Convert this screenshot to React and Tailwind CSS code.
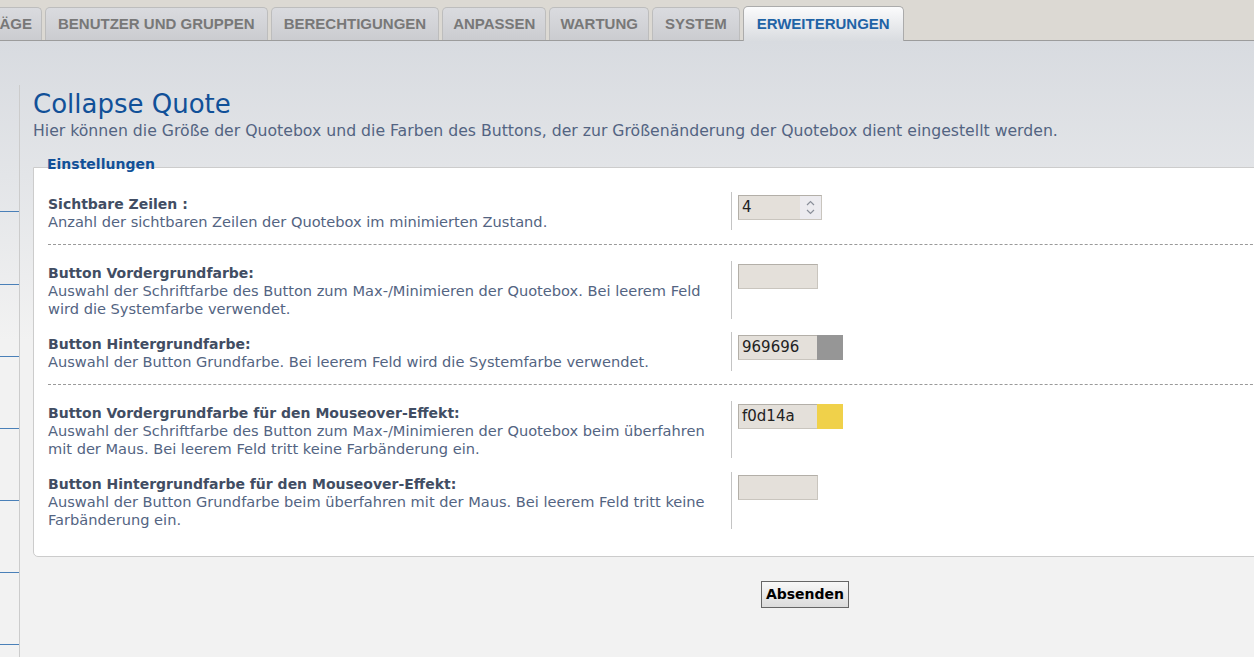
import React from 'react';

const tabs = [
  { label: 'BENUTZER UND GRUPPEN', pad: 'px-[12px]' },
  { label: 'BERECHTIGUNGEN', pad: 'px-[12px]' },
  { label: 'ANPASSEN', pad: 'px-[10px]' },
  { label: 'WARTUNG', pad: 'px-[10px]' },
  { label: 'SYSTEM', pad: 'px-[12px]' },
];

function Tab({ children, pad }) {
  return (
    <div className={`h-[33px] ${pad} flex items-center rounded-t-[5px] border border-b-0 border-[#bdbdbd] bg-gradient-to-b from-[#dadbdf] to-[#cbccd0] text-[15px] font-bold text-[#787878]`}>
      {children}
    </div>
  );
}

function ColorField({ value, swatch }) {
  return (
    <div className="mt-[3px] h-[25px] flex border border-[#c9c5be] border-t-[#b3afa8] border-l-[#b3afa8] bg-[#e4e0da]">
      <div className="w-[78px] pl-[3px] text-[15px] leading-[23px] text-[#222]">{value}</div>
      {swatch && <div className="w-[26px] -my-px -mr-px" style={{ backgroundColor: swatch }} />}
    </div>
  );
}

function Row({ label, desc, height, children }) {
  return (
    <div className="flex items-start" style={{ height }}>
      <div className="w-[683px] pt-[3px] pr-[10px]">
        <div className="text-[14px] leading-[18px] font-bold text-[#414d63]">{label}</div>
        <div className="text-[14.6px] leading-[18px] text-[#536482]">{desc}</div>
      </div>
      <div className="h-full border-l border-[#c4c4c4] pl-[6px]">{children}</div>
    </div>
  );
}

export default function App() {
  return (
    <div className="w-[1254px] h-[657px] overflow-hidden font-['DejaVu_Sans',Verdana,sans-serif]">
      <div className="h-[41px] bg-[#dcd9d3] border-b border-[#9c9c9c] flex items-end gap-[3px] font-['Liberation_Sans',Arial,sans-serif]">
        <div className="h-[33px] w-[42px] pr-[9px] flex items-center justify-end rounded-tr-[5px] border-t border-r border-[#bdbdbd] bg-gradient-to-b from-[#dadbdf] to-[#cbccd0] text-[15px] font-bold text-[#787878] whitespace-nowrap">
          ÄGE
        </div>
        {tabs.map((t) => (
          <Tab key={t.label} pad={t.pad}>{t.label}</Tab>
        ))}
        <div className="h-[35px] -mb-px px-[13px] flex items-center rounded-t-[5px] border border-b-0 border-[#ababab] bg-gradient-to-b from-[#fbfbfc] to-[#d9dce0] text-[15px] font-bold text-[#1f63a6]">
          ERWEITERUNGEN
        </div>
      </div>

      <div className="flex h-[616px] bg-[#f2f2f2] bg-[linear-gradient(#d8dbe0,#e3e5e8_45%,#f2f2f2)] bg-no-repeat bg-[length:100%_300px]">
        <div className="w-[20px] shrink-0 mt-[44px] border-r border-[#cccccc]">
          <div className="h-[127px] border-b border-[#4a80b8]" />
          <div className="h-[73px] border-b border-[#4a80b8]" />
          <div className="h-[72px] border-b border-[#4a80b8]" />
          <div className="h-[72px] border-b border-[#4a80b8]" />
          <div className="h-[72px] border-b border-[#4a80b8]" />
          <div className="h-[72px] border-b border-[#4a80b8]" />
          <div className="h-[72px] border-b border-[#4a80b8]" />
        </div>

        <div className="flex-1 pl-[13px] pt-[47px]">
          <h1 className="text-[26px] leading-[32px] text-[#115098] whitespace-nowrap">Collapse Quote</h1>
          <p className="mt-[2px] text-[15.7px] leading-[18px] text-[#536482] whitespace-nowrap">
            Hier können die Größe der Quotebox und die Farben des Buttons, der zur Größenänderung der Quotebox dient eingestellt werden.
          </p>

          <div className="mt-[16px] ml-[14px] text-[14px] leading-[16px] font-bold text-[#115098] relative">Einstellungen</div>
          <div className="-mt-[5px] -mr-[20px] bg-white border border-[#cccccc] rounded-bl-[5px] pt-[24px] pb-[27px] pl-[14px]">
            <Row
              label="Sichtbare Zeilen :"
              desc="Anzahl der sichtbaren Zeilen der Quotebox im minimierten Zustand."
              height={38}
            >
              <div className="mt-[3px] w-[84px] h-[25px] flex border border-[#c9c5be] border-t-[#b3afa8] border-l-[#b3afa8] bg-[#e4e0da]">
                <div className="flex-1 pl-[3px] text-[15px] leading-[23px] text-[#222]">4</div>
                <div className="w-[21px] bg-[#ecebef] flex flex-col items-center justify-center gap-[3px]">
                  <svg width="9" height="6" viewBox="0 0 9 6"><path d="M1 5 L4.5 1.5 L8 5" fill="none" stroke="#8a8f99" strokeWidth="1.2" /></svg>
                  <svg width="9" height="6" viewBox="0 0 9 6"><path d="M1 1 L4.5 4.5 L8 1" fill="none" stroke="#8a8f99" strokeWidth="1.2" /></svg>
                </div>
              </div>
            </Row>

            <div className="mt-[14px] border-t border-dashed border-[#9a9a9a]" />

            <div className="mt-[16px]">
              <Row
                label="Button Vordergrundfarbe:"
                desc="Auswahl der Schriftfarbe des Button zum Max-/Minimieren der Quotebox. Bei leerem Feld wird die Systemfarbe verwendet."
                height={58}
              >
                <div className="w-[80px]"><ColorField value="" /></div>
              </Row>
            </div>

            <div className="mt-[13px]">
              <Row
                label="Button Hintergrundfarbe:"
                desc="Auswahl der Button Grundfarbe. Bei leerem Feld wird die Systemfarbe verwendet."
                height={39}
              >
                <div className="w-[105px]"><ColorField value="969696" swatch="#969696" /></div>
              </Row>
            </div>

            <div className="mt-[13px] border-t border-dashed border-[#9a9a9a]" />

            <div className="mt-[16px]">
              <Row
                label="Button Vordergrundfarbe für den Mouseover-Effekt:"
                desc="Auswahl der Schriftfarbe des Button zum Max-/Minimieren der Quotebox beim überfahren mit der Maus. Bei leerem Feld tritt keine Farbänderung ein."
                height={57}
              >
                <div className="w-[105px]"><ColorField value="f0d14a" swatch="#f0d14a" /></div>
              </Row>
            </div>

            <div className="mt-[14px]">
              <Row
                label="Button Hintergrundfarbe für den Mouseover-Effekt:"
                desc="Auswahl der Button Grundfarbe beim überfahren mit der Maus. Bei leerem Feld tritt keine Farbänderung ein."
                height={57}
              >
                <div className="w-[80px]"><ColorField value="" /></div>
              </Row>
            </div>
          </div>

          <div className="mt-[24px] ml-[728px]">
            <button className="h-[27px] w-[88px] border border-[#666] bg-gradient-to-b from-[#f8f8f8] to-[#dcdcdc] text-[14px] font-bold text-black">
              Absenden
            </button>
          </div>
        </div>
      </div>
    </div>
  );
}
